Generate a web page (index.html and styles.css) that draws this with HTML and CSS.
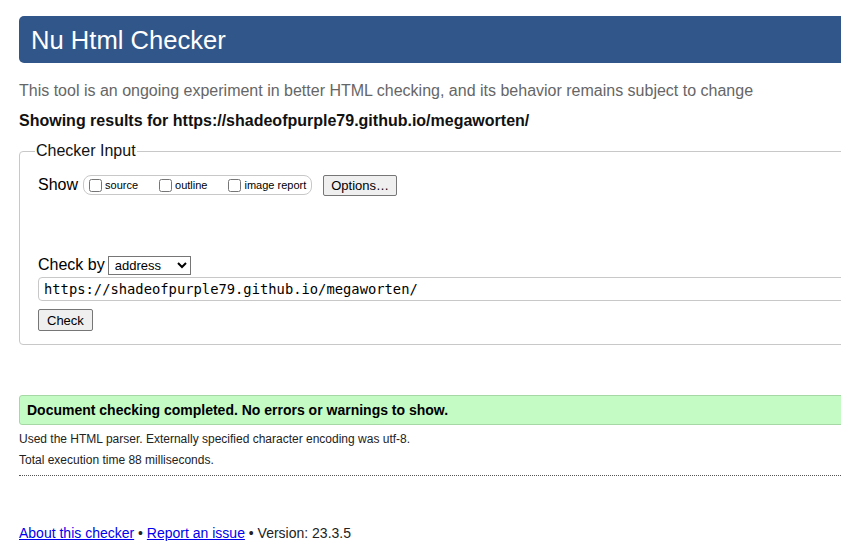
FILE: index.html
```html
<!DOCTYPE html>
<html lang="en">
<head>
<meta charset="utf-8">
<title>Nu Html Checker</title>
<link rel="stylesheet" href="styles.css">
</head>
<body>
<div class="page">
  <h1 class="masthead">Nu Html Checker</h1>
  <p class="intro">This tool is an ongoing experiment in better HTML checking, and its behavior remains subject to change</p>
  <p class="results-for">Showing results for https://shadeofpurple79.github.io/megaworten/</p>

  <fieldset class="checker-input">
    <legend class="legend">Checker Input</legend>
    <div class="show-row">
      <span class="show-label">Show</span>
      <span class="show-group">
        <label class="opt"><input type="checkbox" class="cb">source</label>
        <label class="opt"><input type="checkbox" class="cb">outline</label>
        <label class="opt"><input type="checkbox" class="cb">image report</label>
      </span>
      <button class="btn btn-options" type="button">Options…</button>
    </div>
    <div class="checkby-row">
      <span class="checkby-label">Check by</span>
      <select class="select">
        <option>address</option>
      </select>
    </div>
    <input class="url" type="text" value="https://shadeofpurple79.github.io/megaworten/">
    <div class="check-row"><button class="btn btn-check" type="button">Check</button></div>
  </fieldset>

  <p class="success">Document checking completed. No errors or warnings to show.</p>
  <div class="details">
    <p class="detail">Used the HTML parser. Externally specified character encoding was utf-8.</p>
    <p class="detail">Total execution time 88 milliseconds.</p>
  </div>
  <div class="rule"></div>

  <p class="footer"><a href="#" class="link">About this checker</a> • <a href="#" class="link">Report an issue</a> • Version: 23.3.5</p>
</div>
</body>
</html>
```
FILE: styles.css
```css
html, body {
  margin: 0;
  padding: 0;
  overflow: hidden;
  background: #fff;
}
body {
  font-family: "Liberation Sans", Arial, sans-serif;
  color: #000;
}
.page {
  padding: 16px 0 0 19px;
  width: 900px;
}
.masthead {
  margin: 0;
  height: 47px;
  line-height: 48px;
  padding-left: 12px;
  background: #31568a;
  color: #fff;
  font-size: 25.6px;
  font-weight: normal;
  border-radius: 5px 0 0 5px;
}
.intro {
  margin: 18px 0 0;
  font-size: 16px;
  line-height: 20px;
  color: #666;
}
.results-for {
  margin: 10px 0 0;
  font-size: 16px;
  line-height: 20px;
  font-weight: bold;
  color: #111;
}
.checker-input {
  margin: 10px 0 0;
  padding: 0 0 13px 18px;
  border: 1px solid #c8c8c8;
  border-radius: 4px;
  min-width: 0;
}
.legend {
  font-size: 16px;
  line-height: 20px;
  padding: 0 1px;
  margin-left: -3px;
  color: #111;
}
.show-row {
  display: flex;
  align-items: center;
  margin-top: 13px;
  height: 22px;
}
.show-label {
  font-size: 16px;
  margin-right: 5px;
}
.show-group {
  display: flex;
  align-items: center;
  height: 18px;
  border: 1px solid #c8c8c8;
  border-radius: 8px;
  padding: 0 5px 0 5px;
  font-size: 11px;
}
.opt {
  display: flex;
  align-items: center;
  margin-right: 21px;
}
.opt:last-child {
  margin-right: 0;
}
.cb {
  margin: 0 3px 0 0;
  width: 13px;
  height: 13px;
}
.btn {
  font-family: "Liberation Sans", Arial, sans-serif;
  font-size: 13px;
  padding: 0 8px;
  border: 1px solid #767676;
  border-radius: 2px;
  background: #efefef;
  color: #000;
}
.btn-options {
  height: 21px;
  margin-left: 11px;
  padding: 0 7px;
}
.btn-check {
  height: 22px;
  padding: 0 8px;
}
.checkby-row {
  display: flex;
  align-items: center;
  margin-top: 59px;
  height: 20px;
}
.checkby-label {
  font-size: 16px;
  margin-right: 3px;
}
.select {
  font-family: "Liberation Sans", Arial, sans-serif;
  font-size: 13px;
  width: 83px;
  height: 19px;
  padding: 0 2px;
  border: 1px solid #767676;
  border-radius: 0;
  background: #fff;
  color: #000;
}
.url {
  display: block;
  box-sizing: border-box;
  width: 100%;
  height: 24px;
  margin-top: 2px;
  padding: 0 5px;
  border: 1px solid #c8c8c8;
  border-radius: 4px;
  font-family: "DejaVu Sans Mono", "Liberation Mono", monospace;
  font-size: 13.8px;
  color: #000;
  background: #fff;
}
.check-row {
  margin-top: 8px;
  display: flex;
}
.success {
  margin: 50px 0 0;
  padding: 0 7px;
  height: 28px;
  line-height: 28px;
  background: #c4fbc4;
  border: 1px solid #a6d8a6;
  border-radius: 3px 0 0 3px;
  font-size: 14px;
  font-weight: bold;
  color: #000;
}
.details {
  margin-top: 4px;
}
.detail {
  margin: 0;
  font-size: 12px;
  line-height: 21px;
  color: #222;
}
.rule {
  margin-top: 4px;
  border-top: 1px dotted #555;
}
.footer {
  margin: 48px 0 0;
  font-size: 14px;
  line-height: 18px;
  color: #222;
}
.link {
  color: #0000ee;
  text-decoration: underline;
}
```
